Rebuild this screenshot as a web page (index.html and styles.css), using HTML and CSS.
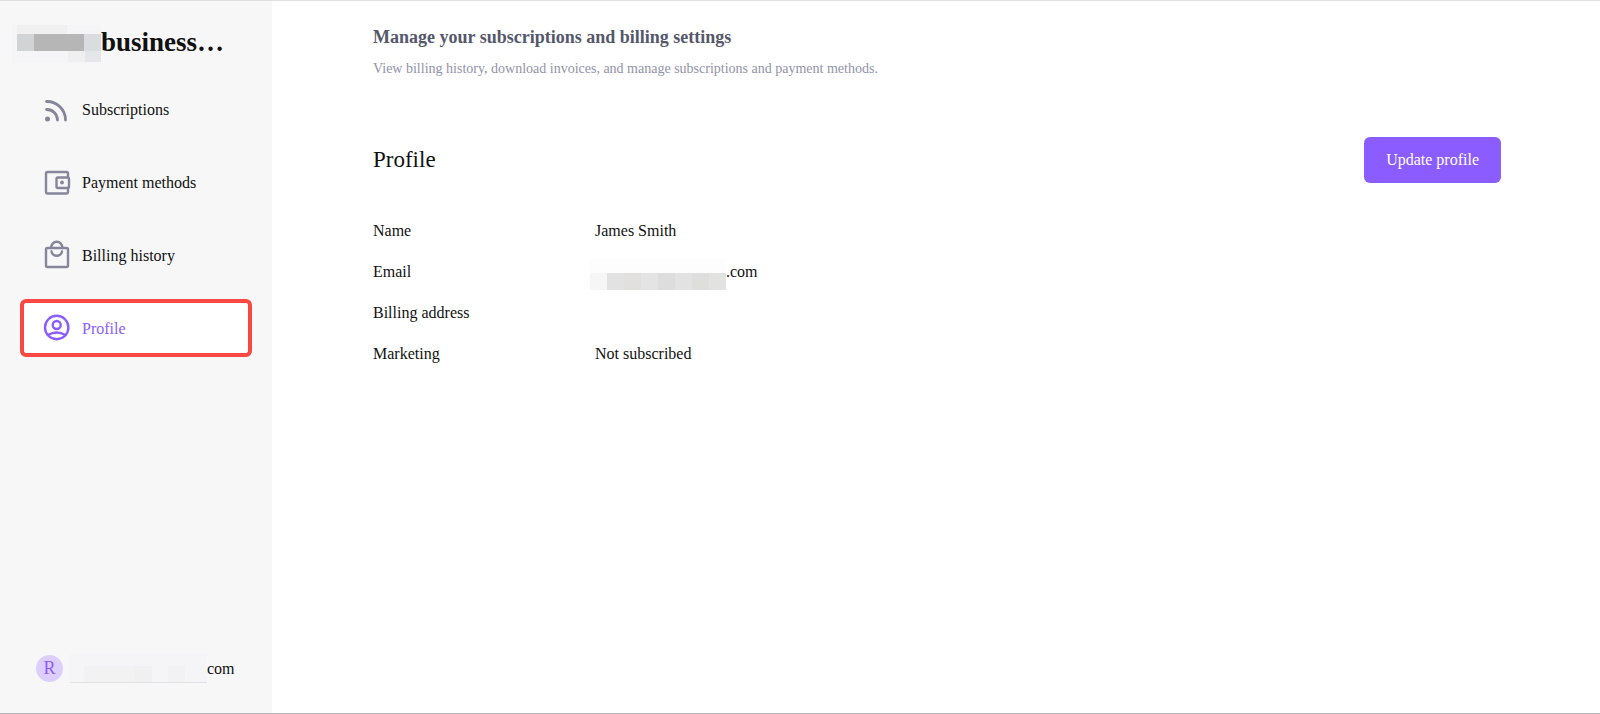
FILE: index.html
```
<!DOCTYPE html>
<html lang="en">
<head>
  <meta charset="UTF-8">
  <meta name="viewport" content="width=device-width, initial-scale=1.0">
  <title>Manage your subscriptions and billing settings</title>
  <link rel="stylesheet" href="styles.css">
</head>
<body>
  <div class="page">
    <aside class="sidebar">
      <div class="brand">
        <svg class="mask" width="89" height="38" shape-rendering="crispEdges" aria-hidden="true">
          <rect width="89" height="38" fill="#f5f5f8"/>
          <rect x="5" width="50" height="9" fill="#f0f0f0"/>
          <rect x="5" y="9" width="17" height="17" fill="#d2d3d4"/>
          <rect x="22" y="9" width="50" height="17" fill="#b7b6b6"/>
          <rect x="72" y="9" width="17" height="17" fill="#dbdce0"/>
          <rect x="56" y="26" width="17" height="11" fill="#efefef"/>
          <rect x="73" y="26" width="16" height="11" fill="#e5e6ea"/>
        </svg>
        <h1>business…</h1>
      </div>

      <!-- Navigation -->
      <nav class="nav">
        <a href="#" class="nav-item">
          <svg class="icon" viewBox="0 0 30 30" aria-hidden="true">
            <circle cx="5.5" cy="25" r="2.5" fill="currentColor" stroke="none"/>
            <path stroke-width="2.8" d="M4.500 15.500A10.500 10.500 0 0 1 15.500 26M4.500 7.500A18.500 18.500 0 0 1 23.500 26"/>
          </svg>
          <span>Subscriptions</span>
        </a>
        <a href="#" class="nav-item">
          <svg class="icon" viewBox="0 0 30 30" aria-hidden="true">
            <path d="M26 10V6.500a1.500 1.500 0 0 0-1.500-1.500h-19A1.500 1.500 0 0 0 4 6.500v18.500a1.500 1.500 0 0 0 1.500 1.500h19a1.500 1.500 0 0 0 1.500-1.500V21"/>
            <rect x="14.500" y="10.500" width="12.500" height="10.500" rx="1.500"/>
            <circle cx="20" cy="15.500" r="1.900" fill="currentColor" stroke="none"/>
          </svg>
          <span>Payment methods</span>
        </a>
        <a href="#" class="nav-item">
          <svg class="icon" viewBox="0 0 30 30" aria-hidden="true">
            <rect x="4" y="8" width="22" height="19" rx="1.500"/>
            <path d="M9 8a5.500 6 0 0 1 11.500 0M9.500 11.500a5.300 5 0 0 0 10.500 0"/>
          </svg>
          <span>Billing history</span>
        </a>
        <a href="#" class="nav-item active">
          <svg class="icon" viewBox="0 0 30 30" aria-hidden="true">
            <circle cx="14.700" cy="14.500" r="11.700"/>
            <circle cx="14.700" cy="12" r="4"/>
            <path d="M6 22q8.700-5 17.400 0"/>
          </svg>
          <span>Profile</span>
        </a>
      </nav>

      <!-- Signed in user -->
      <div class="account">
        <span class="avatar">R</span>
        <svg class="mask" width="137" height="29" shape-rendering="crispEdges" aria-hidden="true">
          <rect width="137" height="29" fill="#f5f5f8"/>
          <rect x="14" y="12" width="68" height="16" fill="#f2f2f3"/>
          <rect x="65" y="12" width="17" height="16" fill="#f0f0f0"/>
          <rect x="98" y="12" width="17" height="16" fill="#f2f2f2"/>
          <rect y="28" width="137" height="1" fill="#e2e2e4"/>
        </svg>
        <span>com</span>
      </div>
    </aside>

    <main class="content">
      <header class="intro">
        <h2>Manage your subscriptions and billing settings</h2>
        <p>View billing history, download invoices, and manage subscriptions and payment methods.</p>
      </header>

      <section>
        <div class="section-head">
          <h3>Profile</h3>
          <button type="button" class="btn">Update profile</button>
        </div>

        <dl class="details">
          <dt>Name</dt>
          <dd>James Smith</dd>
          <dt>Email</dt>
          <dd class="email">
            <svg class="mask" width="137" height="32" shape-rendering="crispEdges" aria-hidden="true">
              <rect width="137" height="15" fill="#fdfdfd"/>
              <rect x="1" y="15" width="17" height="17" fill="#f6f6f6"/>
              <rect x="18" y="15" width="119" height="17" fill="#e2e2e2"/>
              <rect x="35" y="15" width="17" height="17" fill="#e2e0df"/>
              <rect x="52" y="15" width="17" height="17" fill="#e4e4e4"/>
              <rect x="69" y="15" width="17" height="17" fill="#dddddd"/>
              <rect x="103" y="15" width="17" height="17" fill="#dededc"/>
            </svg>
            <span>.com</span>
          </dd>
          <dt>Billing address</dt>
          <dd></dd>
          <dt>Marketing</dt>
          <dd>Not subscribed</dd>
        </dl>
      </section>
    </main>
  </div>
</body>
</html>
```

FILE: styles.css
```
* {
  box-sizing: border-box;
}

body {
  margin: 0;
  font-family: "Liberation Serif", "Times New Roman", serif;
  font-size: 16px;
  line-height: 20px;
  color: #111;
  background-color: #fff;
}

h1,
h2,
h3,
p {
  margin: 0;
}

.page {
  display: flex;
  min-height: 100vh;
  border-top: 1px solid #e0e0e0;
  border-bottom: 1px solid #b8b8be;
}

.mask {
  display: block;
  flex: none;
}

/* Sidebar */
.sidebar {
  display: flex;
  flex-direction: column;
  flex: none;
  width: 272px;
  padding: 24px 20px 30px;
  background-color: #f7f7f7;
}

.brand {
  display: flex;
  margin-left: -8px;
}

.brand h1 {
  font-size: 27px;
  line-height: 34px;
}

.nav {
  display: flex;
  flex-direction: column;
  gap: 15px;
  margin-top: 17px;
}

.nav-item {
  display: flex;
  align-items: center;
  gap: 10px;
  height: 58px;
  padding: 0 18px;
  border: 4px solid transparent;
  border-radius: 6px;
  color: #111;
  text-decoration: none;
}

.nav-item span {
  padding-top: 2px;
}

.nav-item.active {
  border-color: #fa4742;
  background-color: #fff;
  color: #8b5cff;
}

.icon {
  width: 30px;
  height: 30px;
  fill: none;
  stroke: currentColor;
  stroke-width: 2.4;
  stroke-linecap: round;
  color: #85859b;
}

.active .icon {
  color: #8b5cff;
}

.account {
  display: flex;
  align-items: center;
  margin-top: auto;
  padding-left: 16px;
}

.avatar {
  width: 27px;
  height: 27px;
  margin-right: 7px;
  border-radius: 50%;
  background-color: #dccfff;
  color: #8b5cff;
  font-size: 18px;
  line-height: 27px;
  text-align: center;
}

/* Main content */
.content {
  flex: 1;
  padding: 24px 99px 24px 101px;
}

.intro h2 {
  font-size: 18px;
  line-height: 24px;
  color: #55586b;
}

.intro p {
  margin-top: 10px;
  font-size: 14px;
  color: #9292a8;
}

.section-head {
  display: flex;
  align-items: center;
  justify-content: space-between;
  margin-top: 58px;
}

.section-head h3 {
  font-size: 23px;
  font-weight: normal;
}

.btn {
  height: 46px;
  padding: 0 22px;
  border: none;
  border-radius: 6px;
  background-color: #8b5cff;
  color: #fff;
  font-family: inherit;
  font-size: 16px;
  cursor: pointer;
}

.details {
  display: grid;
  grid-template-columns: 222px 1fr;
  grid-auto-rows: 20px;
  row-gap: 21px;
  margin: 38px 0 0;
}

.details dd {
  margin: 0;
}

.email {
  display: flex;
  align-items: center;
}

.email .mask {
  margin: 4px 0 0 -6px;
}
```
